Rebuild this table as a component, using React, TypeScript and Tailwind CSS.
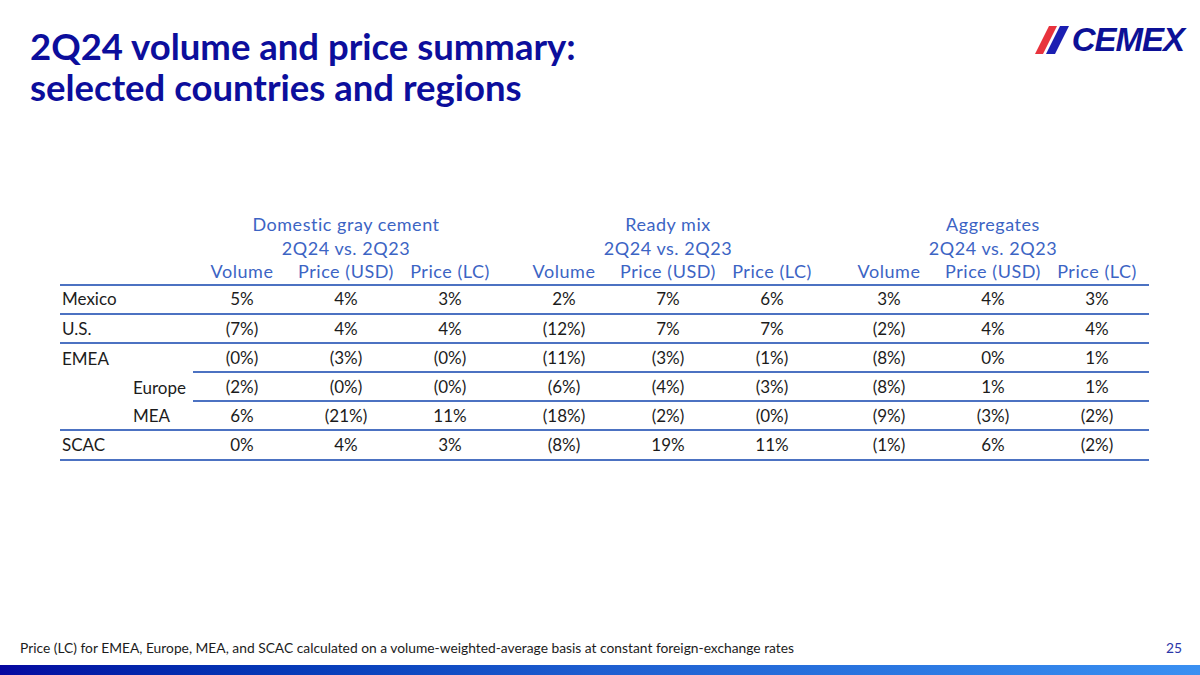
import React from "react";

const cols = "grid grid-cols-[104px_104px_104px_10px_104px_104px_104px_13px_104px_104px_104px]";

const rows: { label: string; sub?: boolean; partial?: boolean; values: string[] }[] = [
  { label: "Mexico", values: ["5%", "4%", "3%", "2%", "7%", "6%", "3%", "4%", "3%"] },
  { label: "U.S.", values: ["(7%)", "4%", "4%", "(12%)", "7%", "7%", "(2%)", "4%", "4%"] },
  { label: "EMEA", partial: true, values: ["(0%)", "(3%)", "(0%)", "(11%)", "(3%)", "(1%)", "(8%)", "0%", "1%"] },
  { label: "Europe", sub: true, partial: true, values: ["(2%)", "(0%)", "(0%)", "(6%)", "(4%)", "(3%)", "(8%)", "1%", "1%"] },
  { label: "MEA", sub: true, values: ["6%", "(21%)", "11%", "(18%)", "(2%)", "(0%)", "(9%)", "(3%)", "(2%)"] },
  { label: "SCAC", values: ["0%", "4%", "3%", "(8%)", "19%", "11%", "(1%)", "6%", "(2%)"] },
];

function Cells({ values }: { values: string[] }) {
  const out: React.ReactNode[] = [];
  values.forEach((v, i) => {
    if (i === 3 || i === 6) out.push(<div key={`g${i}`} />);
    out.push(
      <div key={i} className="flex justify-center whitespace-nowrap">
        {v}
      </div>
    );
  });
  return <>{out}</>;
}

function Logo() {
  return (
    <div className="flex items-center">
      <svg width="36" height="30" viewBox="0 0 36 30" className="mr-[1px]">
        <polygon points="0,29 8,29 22,1 14,1" fill="#e8333d" />
        <polygon points="11,29 20,29 34,1 25,1" fill="#1b1fb2" />
      </svg>
      <span
        className="text-[33px] font-black italic leading-none tracking-[-1px] text-[#0c1096]"
        style={{ fontFamily: '"Liberation Sans", Arial, sans-serif' }}
      >
        CEMEX
      </span>
    </div>
  );
}

export default function App() {
  return (
    <div
      className="relative flex h-[675px] w-[1200px] flex-col overflow-hidden bg-white"
      style={{ fontFamily: "Lato, sans-serif" }}
    >
      <div className="flex justify-between">
        <h1 className="pl-[30px] pt-[26px] text-[36.5px] font-bold leading-[41px] text-[#0c0e9c]">
          2Q24 volume and price summary:
          <br />
          selected countries and regions
        </h1>
        <div className="pr-[16px] pt-[23px]">
          <Logo />
        </div>
      </div>

      <div className="ml-[60px] mt-[105px] w-[1089px] text-[17px] text-[#1c1c1c]">
        <div className="flex text-[18px] leading-[23.5px] tracking-[0.03em] text-[#3c64c4]">
          <div className="w-[130px]" />
          <div className={cols}>
            <div className="col-span-3 flex justify-center">Domestic gray cement</div>
            <div />
            <div className="col-span-3 flex justify-center">Ready mix</div>
            <div />
            <div className="col-span-3 flex justify-center">Aggregates</div>
            <div className="col-span-3 flex justify-center">2Q24 vs. 2Q23</div>
            <div />
            <div className="col-span-3 flex justify-center">2Q24 vs. 2Q23</div>
            <div />
            <div className="col-span-3 flex justify-center">2Q24 vs. 2Q23</div>
            <Cells
              values={[
                "Volume",
                "Price (USD)",
                "Price (LC)",
                "Volume",
                "Price (USD)",
                "Price (LC)",
                "Volume",
                "Price (USD)",
                "Price (LC)",
              ]}
            />
          </div>
        </div>
        <div className="h-[2px] bg-[#4c72c2]" />
        {rows.map((r) => (
          <div
            key={r.label}
            className={`flex h-[29.2px] items-center ${r.partial ? "" : "border-b-2 border-[#4c72c2]"}`}
          >
            <div className={`w-[130px] ${r.sub ? "pl-[73px]" : "pl-[2px]"}`}>{r.label}</div>
            <div className={`h-full flex-1 ${r.partial ? "ml-[3px] border-b-2 border-[#4c72c2]" : ""}`}>
              <div className={`${cols} h-full items-center ${r.partial ? "-ml-[3px]" : ""}`}>
                <Cells values={r.values} />
              </div>
            </div>
          </div>
        ))}
      </div>

      <div className="flex-1" />

      <div className="flex items-end justify-between pl-[20px] pr-[18px] pb-[6px] text-[13.8px] text-[#1c1c1c]">
        <span>
          Price (LC) for EMEA, Europe, MEA, and SCAC calculated on a volume-weighted-average basis at constant
          foreign-exchange rates
        </span>
        <span className="text-[#2a36a8]">25</span>
      </div>
      <div className="h-[10px] bg-gradient-to-r from-[#0606a0] via-[#1e5ed0] to-[#3a90f2]" />
    </div>
  );
}
